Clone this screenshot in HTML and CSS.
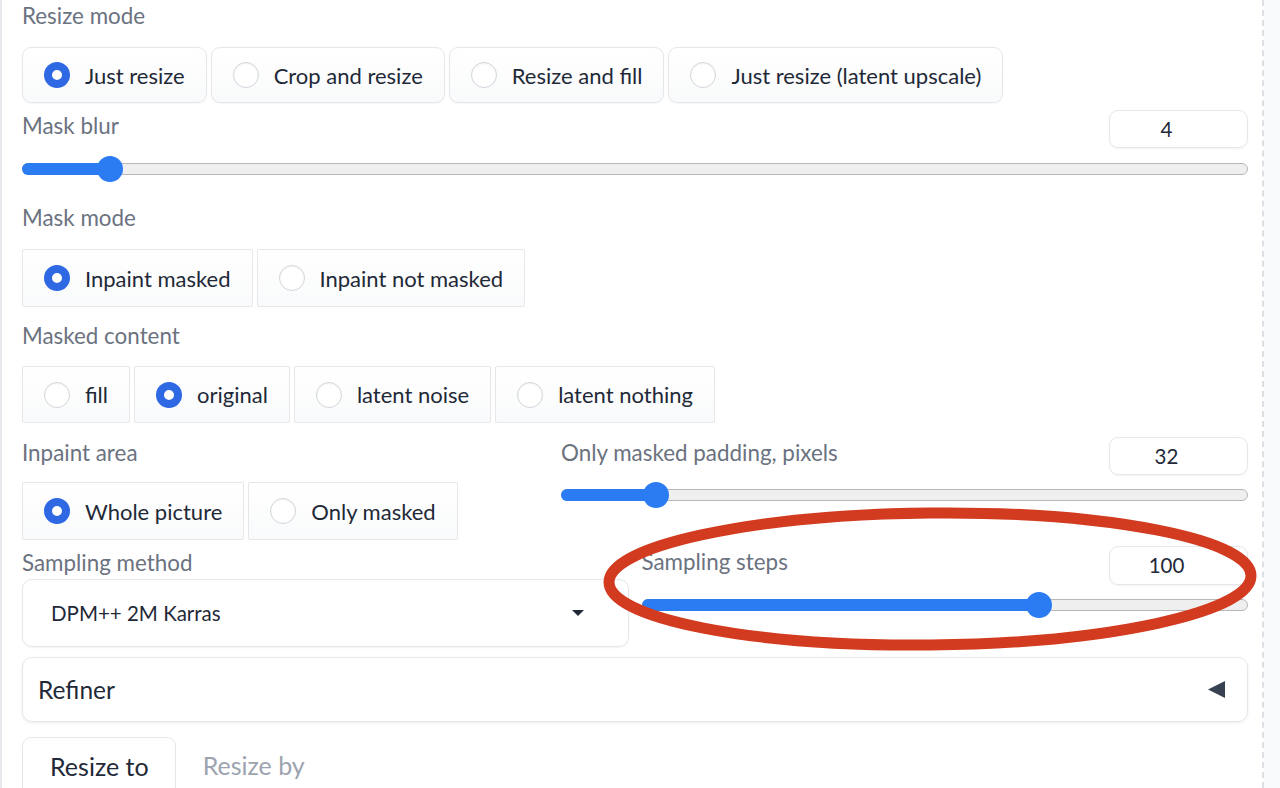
FILE: index.html
```html
<!DOCTYPE html>
<html>
<head>
    <title>img2img settings</title>
    <link rel="stylesheet" href="styles.css">
</head>
<body>
<div class="page">
    <div class="panel">
        <!-- resize mode -->
        <div class="block first">
            <div class="label">Resize mode</div>
            <div class="radios rounded">
                <label class="radio checked"><span class="dot"></span>Just resize</label>
                <label class="radio"><span class="dot"></span>Crop and resize</label>
                <label class="radio"><span class="dot"></span>Resize and fill</label>
                <label class="radio"><span class="dot"></span>Just resize (latent upscale)</label>
            </div>
        </div>

        <div class="block blur">
            <div class="slider-head">
                <div class="label">Mask blur</div>
                <div class="num">4</div>
            </div>
            <div class="track" style="--p: 0.0625"><div class="fill"></div><div class="thumb"></div></div>
        </div>

        <div class="block mode">
            <div class="label">Mask mode</div>
            <div class="radios">
                <label class="radio checked"><span class="dot"></span>Inpaint masked</label>
                <label class="radio"><span class="dot"></span>Inpaint not masked</label>
            </div>
        </div>

        <div class="block content">
            <div class="label">Masked content</div>
            <div class="radios">
                <label class="radio"><span class="dot"></span>fill</label>
                <label class="radio checked"><span class="dot"></span>original</label>
                <label class="radio"><span class="dot"></span>latent noise</label>
                <label class="radio"><span class="dot"></span>latent nothing</label>
            </div>
        </div>

        <div class="block row area">
            <div class="col">
                <div class="label">Inpaint area</div>
                <div class="radios">
                    <label class="radio checked"><span class="dot"></span>Whole picture</label>
                    <label class="radio"><span class="dot"></span>Only masked</label>
                </div>
            </div>
            <div class="col">
                <div class="slider-head">
                    <div class="label">Only masked padding, pixels</div>
                    <div class="num">32</div>
                </div>
                <div class="track" style="--p: 0.125"><div class="fill"></div><div class="thumb"></div></div>
            </div>
        </div>

        <div class="block row sampling">
            <div class="col">
                <div class="label">Sampling method</div>
                <div class="dropdown">
                    <span>DPM++ 2M Karras</span>
                    <svg width="14" height="8" viewBox="0 0 14 8"><path d="M1 1h12L7 7z" fill="#1f2937"/></svg>
                </div>
            </div>
            <div class="col">
                <div class="slider-head">
                    <div class="label">Sampling steps</div>
                    <div class="num">100</div>
                </div>
                <div class="track" style="--p: 0.6644"><div class="fill"></div><div class="thumb"></div></div>
            </div>
        </div>

        <div class="block accordion">
            <span>Refiner</span>
            <svg width="18" height="17" viewBox="0 0 18 17"><path d="M17 0v17L0 8.5z" fill="#374151"/></svg>
        </div>

        <div class="block tabs">
            <div class="tab active">Resize to</div>
            <div class="tab">Resize by</div>
        </div>
    </div>
    <div class="side"></div>

    <!-- annotation over the sampling steps slider -->
    <svg class="mark" width="680" height="160" viewBox="0 0 680 160">
        <ellipse cx="327" cy="72" rx="321" ry="66" fill="none" stroke="#d23b1f" stroke-width="11" transform="rotate(-0.6 327 72)"/>
    </svg>
</div>
</body>
</html>
```

FILE: styles.css
```css
body {
    margin: 0;
    background: #fff;
    font-family: Lato, "Open Sans", sans-serif;
    color: #1f2937;
    overflow: hidden;
}
.page {
    position: relative;
    display: flex;
    height: 788px;
}
.panel {
    width: 1226px;
    padding: 0 14px 0 20px;
    border-left: 2px solid #e5e7eb;
    border-right: 2px dashed #dcdfe4;
}
.side {
    flex: 1;
    background: #f9fafb;
}
.label {
    font-size: 22.4px;
    line-height: 26px;
    color: #6b7280;
    white-space: nowrap;
}
.first {
    padding-top: 3px;
}
.first .radios {
    margin-top: 18px;
}
.blur {
    margin-top: 7px;
}
.mode {
    margin-top: 30px;
}
.mode .radios {
    margin-top: 18px;
}
.content {
    margin-top: 16px;
}
.content .radios {
    margin-top: 17px;
}
.content .radio {
    height: 57px;
}
.row {
    display: grid;
    align-items: start;
}
.area {
    margin-top: 14px;
    grid-template-columns: 519px 1fr;
    column-gap: 20px;
}
.area .col:first-child {
    padding-top: 3px;
}
.area .radios {
    margin-top: 16px;
}
.sampling {
    margin-top: 6px;
    grid-template-columns: 1fr 1fr;
    column-gap: 13px;
}
.sampling .col:first-child {
    padding-top: 4px;
}

/* radio groups */
.radios {
    display: flex;
    gap: 4px;
}
.radio {
    display: flex;
    align-items: center;
    gap: 15px;
    height: 58px;
    box-sizing: border-box;
    padding: 0 21px;
    font-size: 22px;
    color: #1f2937;
    white-space: nowrap;
    background: linear-gradient(#ffffff, #f9fafb);
    border: 1px solid #e5e7eb;
    border-radius: 2px;
}
.rounded .radio {
    height: 56px;
    border-radius: 9px;
    box-shadow: 0 1px 2px rgba(0, 0, 0, 0.04);
}
.dot {
    width: 26px;
    height: 26px;
    box-sizing: border-box;
    border-radius: 50%;
    border: 1.5px solid #d1d5db;
    background: #fff;
    box-shadow: inset 0 1px 2px rgba(0, 0, 0, 0.05);
}
.checked .dot {
    border: 8.5px solid #2f68e3;
    background: #fff;
    box-shadow: none;
}

/* sliders */
.slider-head {
    display: flex;
    justify-content: space-between;
    align-items: flex-start;
}
.slider-head .label {
    margin-top: 3px;
}
.num {
    width: 139px;
    height: 38px;
    box-sizing: border-box;
    padding-right: 24px;
    border: 1px solid #e5e7eb;
    border-radius: 9px;
    box-shadow: 0 1px 2px rgba(0, 0, 0, 0.05);
    text-align: center;
    font-size: 20.5px;
    line-height: 36px;
    color: #1f2937;
}
.sampling .num {
    height: 39px;
    line-height: 37px;
}
.track {
    position: relative;
    height: 12px;
    margin-top: 15px;
    box-sizing: border-box;
    background: #efefef;
    border: 1px solid #b8b8b8;
    border-radius: 6px;
}
.area .track,
.sampling .track {
    margin-top: 14px;
}
.fill {
    position: absolute;
    left: -1px;
    top: -1px;
    height: 12px;
    width: calc((100% - 26px) * var(--p) + 13px);
    background: #2b7bf3;
    border-radius: 6px;
}
.thumb {
    position: absolute;
    top: -8px;
    left: calc((100% - 26px) * var(--p) - 1px);
    width: 26px;
    height: 26px;
    border-radius: 50%;
    background: #2b7bf3;
}

/* dropdown and accordion */
.dropdown {
    margin-top: 3px;
    height: 68px;
    box-sizing: border-box;
    display: flex;
    align-items: center;
    justify-content: space-between;
    padding: 0 43px 0 28px;
    border: 1px solid #e5e7eb;
    border-radius: 10px;
    box-shadow: 0 1px 2px rgba(0, 0, 0, 0.05);
    font-size: 20.5px;
    color: #1f2937;
}
.accordion {
    margin-top: 10px;
    height: 65px;
    box-sizing: border-box;
    display: flex;
    align-items: center;
    justify-content: space-between;
    padding: 0 21px 0 15px;
    border: 1px solid #e5e7eb;
    border-radius: 10px;
    box-shadow: 0 1px 3px rgba(0, 0, 0, 0.08);
    font-size: 24.5px;
    color: #1f2937;
}

/* tabs */
.tabs {
    margin-top: 15px;
    display: flex;
    align-items: flex-start;
}
.tab {
    height: 60px;
    box-sizing: border-box;
    padding: 13px 26px 0 27px;
    font-size: 25px;
    line-height: 30px;
    color: #9ca3af;
}
.tab.active {
    color: #1f2937;
    border: 1px solid #e5e7eb;
    border-bottom: none;
    border-radius: 9px 9px 0 0;
}

.mark {
    position: absolute;
    left: 603px;
    top: 507px;
}
```
